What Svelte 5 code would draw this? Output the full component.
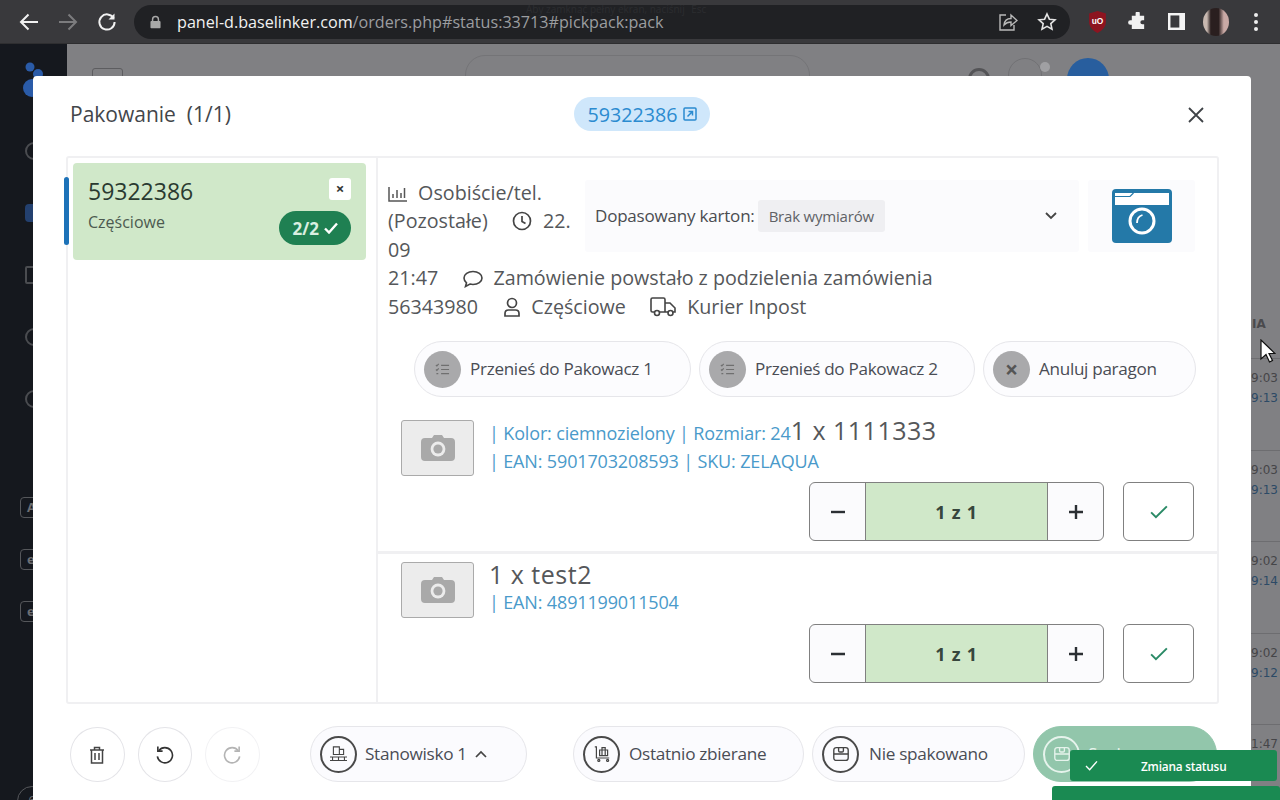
<script lang="ts">
	const products = [
		{ lines: ['| Kolor: ciemnozielony | Rozmiar: 24', '| EAN: 5901703208593 | SKU: ZELAQUA'], name: '1 x 1111333', inline: true },
		{ lines: ['| EAN: 4891199011504'], name: '1 x test2', inline: false }
	];
	const times = [
		['19:03', '19:13'],
		['19:03', '19:13'],
		['19:02', '19:14'],
		['19:02', '19:12'],
		['11:47', '']
	];
</script>

{#snippet listIcon()}
	<svg viewBox="0 0 16 16" width="15" height="15" fill="none" stroke="#6f6f6f" stroke-width="1.3">
		<path d="M6.5 3.5H15M6.5 8H15M6.5 12.5H15" />
		<path d="M1 3.2l1 1 2-2.2M1 8l1 1 2-2.2M1.5 12.5h2" />
	</svg>
{/snippet}

{#snippet cameraGrey()}
	<svg viewBox="0 0 34 26" width="34" height="26">
		<path fill="#a9a9a9" d="M11 3l2-3h8l2 3h7a4 4 0 0 1 4 4v15a4 4 0 0 1-4 4H4a4 4 0 0 1-4-4V7a4 4 0 0 1 4-4z" />
		<circle cx="17" cy="14" r="7.4" fill="#ececec" />
		<circle cx="17" cy="14" r="4.6" fill="#a9a9a9" />
	</svg>
{/snippet}

<div class="chrome">
	<svg class="nav" viewBox="0 0 20 20" width="20" height="20" fill="none" stroke="#f1f1f1" stroke-width="2">
		<path d="M19 10H2M9.5 2.5L2 10l7.5 7.5" />
	</svg>
	<svg class="nav" viewBox="0 0 20 20" width="20" height="20" fill="none" stroke="#7c7c7e" stroke-width="2">
		<path d="M1 10h17M10.5 2.5L18 10l-7.5 7.5" />
	</svg>
	<svg class="nav" viewBox="0 0 20 20" width="20" height="20" fill="none" stroke="#f1f1f1" stroke-width="2">
		<path d="M16.6 6.2A7.6 7.6 0 1 0 17.6 10" />
		<path d="M17.5 1.5v6h-6" fill="#f1f1f1" stroke="none" />
	</svg>
	<div class="url">
		<svg viewBox="0 0 12 14" width="11" height="14" fill="#a8a8a8">
			<path d="M2 6V4.2a4 4 0 0 1 8 0V6h.6c.5 0 .9.4.9.9v6c0 .5-.4.9-.9.9H1.4a.9.9 0 0 1-.9-.9v-6c0-.5.4-.9.9-.9zm1.6 0h4.8V4.2a2.4 2.4 0 0 0-4.8 0z" />
		</svg>
		<span class="address"><b>panel-d.baselinker.com</b>/orders.php#status:33713#pickpack:pack</span>
		<span class="ghost">Aby zamknąć pełny ekran, naciśnij <i>Esc</i></span>
		<svg class="share" viewBox="0 0 20 20" width="20" height="20" fill="none" stroke="#b9b9b9" stroke-width="1.4">
			<path d="M8 3H2v15h14v-5" />
			<path d="M6 13c.5-4.500 3.500-6.500 7-6.500V3l6 5.500-6 5V10c-3 0-5 .8-7 3z" />
		</svg>
		<svg viewBox="0 0 20 20" width="20" height="20" fill="none" stroke="#e4e4e4" stroke-width="1.6">
			<path d="M10 2l2.400 5.200 5.600.6-4.200 3.800 1.200 5.600L10 14.400l-5 2.800 1.200-5.600L2 7.800l5.600-.6z" />
		</svg>
	</div>
	<div class="tools">
		<svg viewBox="0 0 18 21" width="19" height="22">
			<path fill="#8d1420" d="M9 0l8 2.500v8c0 4.500-3.500 8.500-8 10.500-4.500-2-8-6-8-10.500v-8z" />
			<text x="9" y="12.500" text-anchor="middle" font-size="8" font-weight="700" fill="#fff" font-family="Liberation Sans, sans-serif">uO</text>
		</svg>
		<svg viewBox="0 0 20 20" width="19" height="19" fill="#f1f1f1">
			<path d="M8 1.500a2.200 2.200 0 0 1 4.400 0V4H17v4.600h-1.800a2.200 2.200 0 0 0 0 4.400H17v5H4v-4.600H2.500a2.400 2.400 0 0 1 0-4.800H4V4h4z" />
		</svg>
		<svg viewBox="0 0 18 18" width="17" height="17" fill="none" stroke="#f4f4f4" stroke-width="2.600">
			<rect x="1.300" y="1.300" width="15.400" height="15.400" />
			<rect x="12" y="2" width="4" height="14" fill="#f4f4f4" stroke="none" />
		</svg>
		<div class="me"></div>
		<div class="dots"><i></i><i></i><i></i></div>
	</div>
</div>

<div class="page">
	<aside class="side">
		<svg class="logo" viewBox="0 0 24 40" width="24" height="40" fill="#2a5ba8">
			<circle cx="10" cy="7" r="4.500" />
			<circle cx="18" cy="14" r="5" />
			<circle cx="12" cy="28" r="9" />
		</svg>
		<div class="side-icons">
			<span class="ring"></span>
			<span class="ring blue"></span>
			<span class="ring square"></span>
			<span class="ring"></span>
			<span class="ring"></span>
		</div>
		<div class="side-tags">
			<span>A</span>
			<span>e</span>
			<span>e</span>
		</div>
		<span class="side-foot">6</span>
	</aside>
	<div class="content">
		<div class="topbar">
			<div class="grid-ic"></div>
			<div class="search"></div>
			<div class="top-right">
				<span class="t-ic"></span>
				<span class="t-ic big"></span>
				<span class="t-dot"></span>
				<span class="t-avatar"></span>
			</div>
		</div>
		<div class="table">
			<div class="thead">IA</div>
			{#each times as row}
				<div class="trow">
					<span>{row[0]}</span>
					<span class="tblue">{row[1]}</span>
				</div>
			{/each}
		</div>
	</div>

	<section class="modal">
		<header class="m-head">
			<h2>Pakowanie&nbsp; (1/1)</h2>
			<div class="order-pill">
				59322386
				<svg viewBox="0 0 14 14" width="14" height="14" fill="none" stroke="#2b8bd0" stroke-width="1.500">
					<rect x="1" y="1" width="12" height="12" rx="1" />
					<path d="M4.500 9.500L9.500 4.500M5.500 4.500h4v4" />
				</svg>
			</div>
			<svg class="close" viewBox="0 0 16 16" width="16" height="16" fill="none" stroke="#3f4347" stroke-width="1.800">
				<path d="M1 1l14 14M15 1L1 15" />
			</svg>
		</header>

		<div class="box">
			<div class="orders">
				<div class="o-card">
					<div class="o-top">
						<strong>59322386</strong>
						<span class="o-x">×</span>
					</div>
					<div class="o-bottom">
						<span>Częściowe</span>
						<span class="count">
							2/2
							<svg viewBox="0 0 14 12" width="14" height="12" fill="none" stroke="#fff" stroke-width="2.400"><path d="M1 6.500l4 4 8-9" /></svg>
						</span>
					</div>
				</div>
			</div>

			<div class="detail">
				<div class="info">
					<div class="tile cam-tile">
						<svg viewBox="0 0 60 54" width="60" height="54">
							<rect width="60" height="54" rx="4" fill="#2479a8" />
							<path fill="#fff" d="M3 4h54v12H3z" />
							<path d="M3 7.500h15l3.500-3.500" fill="none" stroke="#2479a8" stroke-width="1.200" />
							<circle cx="30" cy="32" r="12" fill="none" stroke="#fff" stroke-width="3" />
							<path d="M25 34c0-4 2-7 5.500-8" fill="none" stroke="#fff" stroke-width="1.800" />
						</svg>
					</div>
					<div class="tile carton">
						<span class="c-label">Dopasowany karton:</span>
						<span class="c-tag">Brak wymiarów</span>
						<svg class="c-arrow" viewBox="0 0 12 8" width="12" height="8" fill="none" stroke="#444" stroke-width="1.800"><path d="M1 1l5 5 5-5" /></svg>
					</div>
					<svg class="i first" viewBox="0 0 20 18" width="20" height="18" fill="none" stroke="#555" stroke-width="1.500">
						<path d="M1 2v14h18M5 13V9M9 13V5M13 13V8M16.500 13V3" />
					</svg>
					Osobiście/tel.<br />
					(Pozostałe)
					<svg class="i gap clock" viewBox="0 0 20 20" width="20" height="20" fill="none" stroke="#444" stroke-width="1.700">
						<circle cx="10" cy="10" r="8.500" /><path d="M10 5v5.500l3.500 2" />
					</svg>
					22.<br />
					09<br />
					21:47
					<svg class="i gap chat" viewBox="0 0 20 18" width="20" height="18" fill="none" stroke="#444" stroke-width="1.600">
						<path d="M10 1.500c5 0 9 2.900 9 6.500s-4 6.500-9 6.500c-1 0-2-.1-3-.4L2.500 16.500l1-3.700C2 11.600 1 10 1 8c0-3.600 4-6.500 9-6.500z" />
					</svg>
					Zamówienie powstało z podzielenia zamówienia<br />
					56343980
					<svg class="i gap user" viewBox="0 0 20 20" width="20" height="20" fill="none" stroke="#444" stroke-width="1.700">
						<circle cx="10" cy="6" r="4.500" /><path d="M3 19v-2.500c0-2 1.500-3.500 3.500-3.500h7c2 0 3.500 1.500 3.500 3.500V19z" />
					</svg>
					Częściowe
					<svg class="i gap wide" viewBox="0 0 26 20" width="26" height="20" fill="none" stroke="#444" stroke-width="1.600">
						<path d="M5 15H2.500A1.500 1.500 0 0 1 1 13.500v-11A1.500 1.500 0 0 1 2.500 1h11A1.500 1.500 0 0 1 15 2.500V15H9.500M15 6h5l5 5v4h-2.500M15 15h3.500" />
						<circle cx="7" cy="16" r="2.500" /><circle cx="20.500" cy="16" r="2.500" />
					</svg>
					Kurier Inpost
				</div>

				<div class="actions">
					<div class="pill"><span class="dot">{@render listIcon()}</span><span class="lbl">Przenieś do Pakowacz 1</span></div>
					<div class="pill narrow"><span class="dot">{@render listIcon()}</span><span class="lbl">Przenieś do Pakowacz 2</span></div>
					<div class="pill cancel"><span class="dot">×</span><span class="lbl">Anuluj paragon</span></div>
				</div>

				{#each products as p}
					<div class="product" class:stack={!p.inline}>
						<div class="p-main">
							<div class="thumb">{@render cameraGrey()}</div>
							<div class="p-text">
								{#if p.inline}
									<span class="blue">{p.lines[0]}</span><span class="name">{p.name}</span>
									<div class="blue">{p.lines[1]}</div>
								{:else}
									<div class="name">{p.name}</div>
									<div class="blue">{p.lines[0]}</div>
								{/if}
							</div>
						</div>
						<div class="p-controls">
							<div class="qty">
								<span class="q-btn">
									<svg viewBox="0 0 16 16" width="16" height="16" stroke="#2b2f33" stroke-width="2.400"><path d="M1 8h14" /></svg>
								</span>
								<span class="q-val">1 z 1</span>
								<span class="q-btn">
									<svg viewBox="0 0 16 16" width="16" height="16" stroke="#2b2f33" stroke-width="2.400"><path d="M1 8h14M8 1v14" /></svg>
								</span>
							</div>
							<div class="confirm">
								<svg viewBox="0 0 20 16" width="18" height="14" fill="none" stroke="#2a8a66" stroke-width="2.200"><path d="M1 8.500l5.500 5.500L19 1.500" /></svg>
							</div>
						</div>
					</div>
				{/each}
			</div>
		</div>

		<footer class="m-foot">
			<div class="rounds">
				<span class="round">
					<svg viewBox="0 0 16 18" width="16" height="18" fill="none" stroke="#444" stroke-width="1.500">
						<path d="M1 4h14M5.500 4V1.500h5V4M2.500 4v13h11V4M6 7v7M10 7v7" />
					</svg>
				</span>
				<span class="round">
					<svg viewBox="0 0 20 20" width="19" height="19" fill="none" stroke="#333" stroke-width="1.700">
						<path d="M4 6a8 8 0 1 1-1.500 6" /><path d="M3 1.500V6.500h5" />
					</svg>
				</span>
				<span class="round off">
					<svg viewBox="0 0 20 20" width="19" height="19" fill="none" stroke="#b4b4b4" stroke-width="1.700">
						<path d="M16 6a8 8 0 1 0 1.500 6" /><path d="M17 1.500V6.500h-5" />
					</svg>
				</span>
			</div>
			<div class="f-pills">
				<div class="f-pill first">
					<span class="f-ic">
						<svg viewBox="0 0 22 20" width="19" height="17" fill="none" stroke="#444" stroke-width="1.300">
							<path d="M5 1h7v9H5zM12 4h5v6h-5zM1 13h20M1 17h20M4 13v4M11 13v4M18 13v4" />
						</svg>
					</span>
					<span class="lbl">Stanowisko 1</span>
					<svg class="chev" viewBox="0 0 12 8" width="12" height="8" fill="none" stroke="#444" stroke-width="1.700"><path d="M1 7l5-5 5 5" /></svg>
				</div>
				<div class="f-pill second">
					<span class="f-ic">
						<svg viewBox="0 0 22 20" width="18" height="16" fill="none" stroke="#444" stroke-width="1.500">
							<path d="M2 1h2v14h16M8 5h10v7H8zM11 5V2h4v3M11 5v7M15 5v7" /><circle cx="7" cy="18" r="1.300" /><circle cx="18" cy="18" r="1.300" />
						</svg>
					</span>
					<span class="lbl">Ostatnio zbierane</span>
				</div>
				<div class="f-pill third">
					<span class="f-ic">
						<svg viewBox="0 0 20 20" width="16" height="16" fill="none" stroke="#444" stroke-width="1.700">
							<rect x="1" y="2" width="18" height="16" rx="3" /><path d="M1 10h18M7 2v4c0 1 .5 1.500 1.500 1.500h3c1 0 1.500-.5 1.500-1.500V2" />
						</svg>
					</span>
					<span class="lbl">Nie spakowano</span>
				</div>
				<div class="f-pill done">
					<span class="f-ic">
						<svg viewBox="0 0 20 20" width="16" height="16" fill="none" stroke="#e6f3ec" stroke-width="1.700">
							<rect x="1" y="2" width="18" height="16" rx="3" /><path d="M1 10h18M7 2v4c0 1 .5 1.500 1.500 1.500h3c1 0 1.500-.5 1.500-1.500V2" />
						</svg>
					</span>
					<span class="lbl">Spakowano</span>
				</div>
			</div>
		</footer>
	</section>

	<div class="toasts">
		<div class="toast">
			<svg viewBox="0 0 14 12" width="13" height="11" fill="none" stroke="#fff" stroke-width="1.500"><path d="M1 6.500l4 4 8-9" /></svg>
			<span>Zmiana statusu</span>
		</div>
		<div class="toast second-toast"></div>
	</div>

	<svg class="cursor" viewBox="0 0 16 24" width="16" height="24">
		<path d="M1 1v19l5-4.500 3.500 7.500 3-1.500-3.500-7H15z" fill="#fff" stroke="#111" stroke-width="1.200" />
	</svg>
</div>

<style>
	:global(body) {
		margin: 0;
		overflow: hidden;
		font-family: 'Open Sans', 'Noto Sans', sans-serif;
		background: #808083;
	}

	.chrome {
		height: 44px;
		box-sizing: border-box;
		display: flex;
		align-items: center;
		gap: 19px;
		padding: 0 14px 0 19px;
		background: #39393c;
		border-bottom: 1px solid #2e2e30;
	}
	.nav {
		flex: none;
	}
	.url {
		flex: none;
		position: relative;
		width: 936px;
		height: 34px;
		margin-left: -2px;
		box-sizing: border-box;
		border-radius: 17px;
		background: #202124;
		display: flex;
		align-items: center;
		padding: 0 13px 0 16px;
		color: #9b9da0;
		font-size: 16.150px;
	}
	.url > svg:last-child {
		margin-left: 19px;
	}
	.address {
		margin-left: 16px;
		flex: 1;
		white-space: nowrap;
	}
	.address b {
		font-weight: 400;
		color: #f1f1f1;
	}
	.ghost {
		position: absolute;
		left: 392px;
		top: -3px;
		font-size: 10px;
		color: #2c2d30;
		white-space: nowrap;
	}
	.ghost i {
		font-style: normal;
		margin-left: 4px;
	}
	.tools {
		display: flex;
		align-items: center;
		gap: 21px;
		margin-left: -1px;
	}
	.me {
		width: 26px;
		height: 28px;
		margin-left: -3px;
		border-radius: 50%;
		background: linear-gradient(90deg, #c8b8b0 0 15%, #2a1f1f 30% 60%, #c9a9a5 80%);
	}
	.dots {
		display: flex;
		flex-direction: column;
		gap: 3px;
		margin-left: 4px;
	}
	.dots i {
		width: 4px;
		height: 4px;
		border-radius: 50%;
		background: #eee;
	}

	.page {
		position: relative;
		height: 756px;
		display: flex;
		overflow: hidden;
	}

	.side {
		width: 67px;
		flex: none;
		box-sizing: border-box;
		background: #15181e;
		display: flex;
		flex-direction: column;
		padding: 16px 0 0 20px;
		position: relative;
	}
	.logo {
		margin-bottom: 42px;
	}
	.side-icons {
		display: flex;
		flex-direction: column;
		gap: 44px;
		margin-left: 5px;
	}
	.ring {
		width: 18px;
		height: 18px;
		box-sizing: border-box;
		border: 2px solid #4a4c50;
		border-radius: 50%;
	}
	.ring.blue {
		border-color: #23406f;
		background: #23406f;
		border-radius: 4px;
	}
	.ring.square {
		border-radius: 2px;
	}
	.side-tags {
		display: flex;
		flex-direction: column;
		gap: 31px;
		margin-top: 89px;
	}
	.side-tags span {
		width: 30px;
		height: 21px;
		box-sizing: border-box;
		border: 1px solid #55575b;
		border-radius: 4px;
		color: #6d6f73;
		font-size: 13px;
		font-weight: 700;
		padding-left: 6px;
		line-height: 18px;
	}
	.side-foot {
		position: absolute;
		left: 17px;
		bottom: -16px;
		width: 28px;
		height: 28px;
		border: 1px solid #55575b;
		border-radius: 50%;
		color: #6d6f73;
		font-size: 13px;
		text-align: center;
		line-height: 26px;
	}

	.content {
		flex: 1;
		min-width: 0;
		display: flex;
		flex-direction: column;
		color: #3c3d40;
	}
	.topbar {
		height: 60px;
		display: flex;
		align-items: flex-start;
		padding-top: 11px;
		box-sizing: border-box;
	}
	.grid-ic {
		width: 29px;
		height: 30px;
		margin: 13px 0 0 25px;
		border: 1px solid #5d5d60;
		border-radius: 3px;
	}
	.search {
		width: 343px;
		height: 40px;
		margin-left: 342px;
		border: 1px solid #747477;
		border-radius: 20px;
	}
	.top-right {
		margin-left: 158px;
		display: flex;
		gap: 18px;
		position: relative;
	}
	.t-ic {
		width: 22px;
		height: 22px;
		margin-top: 13px;
		border: 3px solid #545457;
		border-radius: 50%;
		box-sizing: border-box;
	}
	.t-ic.big {
		width: 34px;
		height: 34px;
		margin-top: 3px;
		border: 1px solid #717174;
	}
	.t-dot {
		width: 10px;
		height: 10px;
		margin: 7px 0 0 -20px;
		border-radius: 50%;
		background: #a0a0a3;
	}
	.t-avatar {
		width: 42px;
		height: 42px;
		margin-left: -1px;
		margin-top: 3px;
		border-radius: 50%;
		background: #285e9e;
	}
	.table {
		margin-top: 217px;
		display: flex;
		flex-direction: column;
		align-items: flex-end;
		font-family: 'DejaVu Sans', sans-serif;
		font-size: 12px;
	}
	.thead {
		height: 41px;
		width: 28px;
		font-weight: 700;
		font-size: 12px;
		color: #4a4a4d;
	}
	.trow {
		width: 100%;
		height: 91.500px;
		box-sizing: border-box;
		padding: 9px 2px 0 0;
		border-top: 1px solid #6d6d70;
		display: flex;
		flex-direction: column;
		align-items: flex-end;
		line-height: 20px;
		color: #454548;
	}
	.tblue {
		color: #2c4a66;
	}

	.modal {
		position: absolute;
		left: 33px;
		top: 32px;
		width: 1218px;
		height: 780px;
		box-sizing: border-box;
		padding: 0 33px;
		background: #fff;
		border-radius: 4px;
		color: #4a4c50;
	}
	.m-head {
		height: 80px;
		display: flex;
		align-items: center;
		position: relative;
		padding: 0 4px;
		margin-bottom: 0;
	}
	.m-head h2 {
		margin: 0;
		font-size: 21px;
		font-weight: 400;
		color: #43464a;
		position: relative;
		top: -2px;
	}
	.order-pill {
		position: absolute;
		left: 508px;
		top: 21px;
		width: 136px;
		height: 34px;
		box-sizing: border-box;
		border-radius: 17px;
		background: #cfe7fb;
		color: #2b8bd0;
		font-size: 19.700px;
		display: flex;
		align-items: center;
		justify-content: center;
		gap: 5px;
	}
	.close {
		margin-left: auto;
		margin-right: 10px;
		position: relative;
		top: -1px;
	}

	.box {
		display: flex;
		width: 1153px;
		height: 548px;
		box-sizing: border-box;
		border: 2px solid #f0f0f2;
		border-radius: 3px;
	}
	.orders {
		width: 310px;
		flex: none;
		box-sizing: border-box;
		padding: 5px 10px 0 5px;
		border-right: 2px solid #f0f0f2;
		position: relative;
	}
	.orders::before {
		content: '';
		position: absolute;
		left: -4px;
		top: 19px;
		width: 5px;
		height: 68px;
		border-radius: 3px;
		background: #1d72b8;
	}
	.o-card {
		height: 97px;
		box-sizing: border-box;
		padding: 12px 15px 0 15px;
		border-radius: 4px;
		background: #d0e8c9;
		color: #2f3d34;
	}
	.o-top {
		display: flex;
		justify-content: space-between;
		align-items: flex-start;
	}
	.o-top strong {
		font-size: 23px;
		font-weight: 500;
		line-height: 32px;
		color: #2a3a30;
	}
	.o-x {
		width: 22px;
		height: 22px;
		margin-top: 3px;
		border-radius: 3px;
		background: #fff;
		color: #333;
		font-size: 15px;
		font-weight: 700;
		line-height: 21px;
		text-align: center;
	}
	.o-bottom {
		display: flex;
		justify-content: space-between;
		align-items: flex-start;
		font-size: 16px;
		color: #4c5a50;
		margin-top: 4px;
	}
	.count {
		display: flex;
		align-items: center;
		gap: 5px;
		height: 34px;
		padding: 0 13px 0 14px;
		border-radius: 17px;
		background: #1f8052;
		color: #d9eee0;
		font-size: 17px;
		font-weight: 700;
	}

	.detail {
		flex: 1;
		min-width: 0;
		display: flex;
		flex-direction: column;
	}
	.info {
		padding: 20.500px 22px 0 10px;
		font-size: 19.700px;
		line-height: 28.500px;
		color: #55575a;
		height: 162px;
		box-sizing: border-box;
		white-space: nowrap;
	}
	.tile {
		float: right;
		height: 72px;
		margin-top: 1.500px;
		box-sizing: border-box;
		background: #fbfbfd;
		border-radius: 3px;
		display: flex;
		align-items: center;
	}
	.cam-tile {
		width: 107px;
		justify-content: center;
		margin-left: 9px;
	}
	.carton {
		width: 494px;
		padding: 0 22px 0 10px;
		margin-left: 10px;
		font-size: 17px;
		line-height: 20px;
		letter-spacing: -0.2px;
	}
	.c-label {
		color: #4a4c50;
		font-weight: 500;
	}
	.c-tag {
		margin-left: 3px;
		padding: 6px 11px;
		background: #efeff2;
		border-radius: 3px;
		font-size: 15px;
		color: #606266;
	}
	.c-arrow {
		margin-left: auto;
	}
	.i {
		vertical-align: -3px;
		margin-right: 6px;
	}
	.i.first {
		margin-right: 5px;
	}
	.i.gap {
		margin-left: 19px;
	}
	.i.chat {
		margin-left: 20px;
		margin-right: 5px;
	}
	.i.user {
		margin-left: 19px;
		margin-right: 4px;
	}
	.i.wide {
		margin-left: 19px;
		margin-right: 6px;
	}

	.actions {
		display: flex;
		justify-content: flex-end;
		gap: 8px;
		padding-right: 21px;
		margin-top: 21px;
		height: 56px;
		flex: none;
	}
	.pill {
		width: 277px;
		box-sizing: border-box;
		display: flex;
		align-items: center;
		gap: 9px;
		padding-left: 9px;
		border: 1px solid #e6e6ea;
		border-radius: 28px;
		background: #fcfcfe;
		font-size: 17.100px;
		font-weight: 500;
		letter-spacing: -0.3px;
		color: #4a4d55;
		white-space: nowrap;
	}
	.lbl {
		position: relative;
		top: -1px;
	}
	.pill.narrow {
		width: 276px;
	}
	.pill.cancel {
		width: 213px;
	}
	.dot {
		width: 37px;
		height: 37px;
		border-radius: 50%;
		background: #a9a9ab;
		display: flex;
		align-items: center;
		justify-content: center;
		font-size: 23px;
		font-weight: 700;
		color: #555;
	}

	.product {
		height: 149px;
		box-sizing: border-box;
		padding: 15px 22px 0 23px;
		margin-top: 8px;
		border-bottom: 3px solid #f0f0f2;
	}
	.product.stack {
		height: 148px;
		margin-top: 0;
		padding-top: 8px;
		border-bottom: 0;
	}
	.p-main {
		display: flex;
		gap: 15px;
		height: 62px;
	}
	.thumb {
		width: 73px;
		height: 56px;
		box-sizing: border-box;
		flex: none;
		border: 1px solid #aaa;
		border-radius: 3px;
		background: #ececec;
		display: flex;
		align-items: center;
		justify-content: center;
	}
	.p-text {
		font-size: 18px;
		line-height: 28px;
		letter-spacing: -0.15px;
		white-space: nowrap;
		margin-top: -4px;
	}
	.stack .p-text {
		margin-top: -2px;
	}
	.blue {
		color: #4a9aca;
	}
	.name {
		font-size: 25px;
		color: #55575a;
		letter-spacing: 0.5px;
	}
	.p-controls {
		display: flex;
		justify-content: flex-end;
		align-items: flex-start;
		gap: 19px;
		margin-right: 1px;
	}
	.qty {
		width: 295px;
		height: 59px;
		box-sizing: border-box;
		display: flex;
		border: 1px solid #808080;
		border-radius: 6px;
		overflow: hidden;
		background: #fbfbfd;
	}
	.q-btn {
		width: 55px;
		flex: none;
		display: flex;
		align-items: center;
		justify-content: center;
	}
	.q-val {
		flex: 1;
		display: flex;
		align-items: center;
		justify-content: center;
		background: #d0e8c9;
		border-left: 1px solid #808080;
		border-right: 1px solid #808080;
		font-size: 18px;
		font-weight: 700;
		letter-spacing: 0.8px;
		color: #37463c;
	}
	.confirm {
		width: 71px;
		height: 59px;
		box-sizing: border-box;
		display: flex;
		align-items: center;
		justify-content: center;
		border: 1px solid #808080;
		border-radius: 6px;
	}

	.m-foot {
		display: flex;
		align-items: flex-start;
		margin-top: 22px;
		padding-left: 4px;
	}
	.rounds {
		display: flex;
		gap: 13px;
		margin-top: 1px;
	}
	.round {
		width: 54.500px;
		height: 55px;
		box-sizing: border-box;
		display: flex;
		align-items: center;
		justify-content: center;
		border: 1px solid #e4e4e8;
		border-radius: 50%;
	}
	.round.off {
		border-color: #f2f2f4;
	}
	.f-pills {
		display: flex;
		gap: 8px;
		margin-left: 50.500px;
	}
	.f-pill {
		height: 56px;
		box-sizing: border-box;
		display: flex;
		align-items: center;
		gap: 8px;
		padding-left: 9px;
		border: 1px solid #e6e6ea;
		border-radius: 28px;
		background: #fbfbfe;
		font-size: 17.200px;
		font-weight: 500;
		letter-spacing: -0.3px;
		color: #4a4d55;
		white-space: nowrap;
	}
	.f-pill.first {
		width: 217px;
		margin-right: 38px;
	}
	.f-pill.second {
		width: 231px;
		gap: 9px;
	}
	.f-pill.third {
		width: 213px;
		gap: 10px;
	}
	.f-pill.done {
		width: 184px;
		background: #92c6ab;
		border-color: #92c6ab;
		color: #e6f3ec;
	}
	.f-ic {
		width: 37px;
		height: 37px;
		box-sizing: border-box;
		border: 2px solid #4a4a4a;
		border-radius: 50%;
		display: flex;
		align-items: center;
		justify-content: center;
	}
	.done .f-ic {
		border-color: #e6f3ec;
	}

	.toasts {
		position: absolute;
		right: 0;
		top: 706px;
		width: 228px;
		display: flex;
		flex-direction: column;
		align-items: flex-end;
		gap: 5px;
	}
	.toast {
		width: 207px;
		height: 31px;
		margin-right: 3px;
		box-sizing: border-box;
		display: flex;
		align-items: center;
		padding-left: 15px;
		border-radius: 3px;
		background: #1a8a52;
		color: #fff;
		font-size: 11.800px;
		font-weight: 600;
		letter-spacing: -0.2px;
	}
	.toast span {
		margin-left: 43px;
	}
	.second-toast {
		width: 228px;
		height: 40px;
		margin-right: 0;
	}
	.cursor {
		position: absolute;
		left: 1260px;
		top: 295px;
	}
</style>
